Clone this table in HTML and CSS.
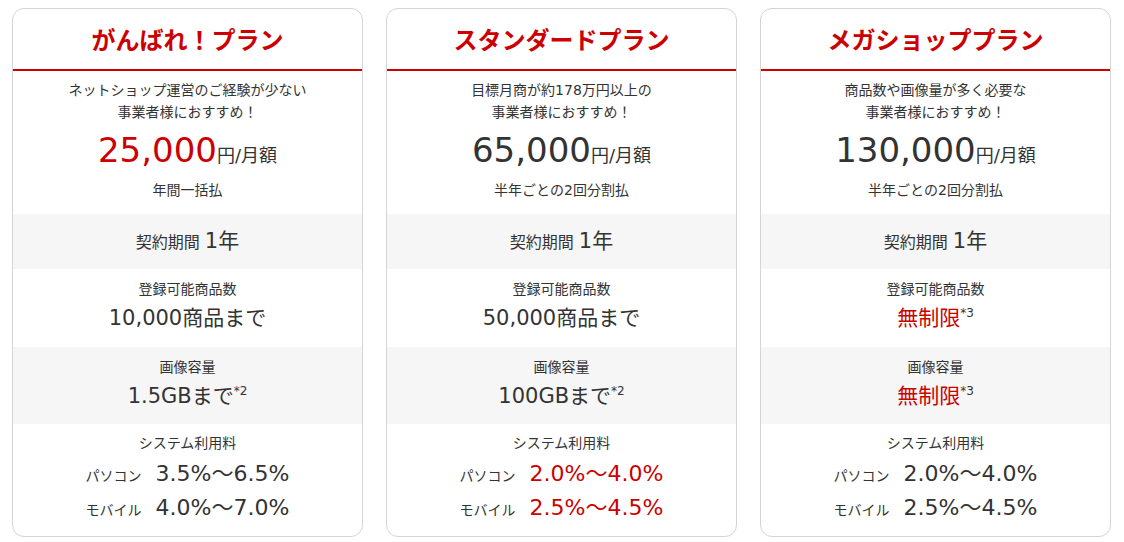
FILE: index.html
```html
<!DOCTYPE html>
<html lang="ja">
<head>
<meta charset="utf-8">
<link rel="stylesheet" href="styles.css">
</head>
<body>
<div class="plans">
  <div class="card">
    <div class="title">がんばれ！プラン</div>
    <div class="intro">
      <p class="desc">ネットショップ運営のご経験が少ない<br>事業者様におすすめ！</p>
      <p class="price"><span class="amount red">25,000</span><span class="unit">円/月額</span></p>
      <p class="note">年間一括払</p>
    </div>
    <div class="term gray">契約期間 <span class="big">1年</span></div>
    <div class="spec">
      <p class="label">登録可能商品数</p>
      <p class="value">10,000商品まで</p>
    </div>
    <div class="spec gray">
      <p class="label">画像容量</p>
      <p class="value">1.5GBまで<sup>*2</sup></p>
    </div>
    <div class="fee">
      <p class="label">システム利用料</p>
      <div class="fee-grid">
        <span class="dev">パソコン</span><span class="rate">3.5%〜6.5%</span>
        <span class="dev">モバイル</span><span class="rate">4.0%〜7.0%</span>
      </div>
    </div>
  </div>

  <div class="card">
    <div class="title">スタンダードプラン</div>
    <div class="intro">
      <p class="desc">目標月商が約178万円以上の<br>事業者様におすすめ！</p>
      <p class="price"><span class="amount">65,000</span><span class="unit">円/月額</span></p>
      <p class="note">半年ごとの2回分割払</p>
    </div>
    <div class="term gray">契約期間 <span class="big">1年</span></div>
    <div class="spec">
      <p class="label">登録可能商品数</p>
      <p class="value">50,000商品まで</p>
    </div>
    <div class="spec gray">
      <p class="label">画像容量</p>
      <p class="value">100GBまで<sup>*2</sup></p>
    </div>
    <div class="fee">
      <p class="label">システム利用料</p>
      <div class="fee-grid">
        <span class="dev">パソコン</span><span class="rate red">2.0%〜4.0%</span>
        <span class="dev">モバイル</span><span class="rate red">2.5%〜4.5%</span>
      </div>
    </div>
  </div>

  <div class="card">
    <div class="title">メガショッププラン</div>
    <div class="intro">
      <p class="desc">商品数や画像量が多く必要な<br>事業者様におすすめ！</p>
      <p class="price"><span class="amount">130,000</span><span class="unit">円/月額</span></p>
      <p class="note">半年ごとの2回分割払</p>
    </div>
    <div class="term gray">契約期間 <span class="big">1年</span></div>
    <div class="spec">
      <p class="label">登録可能商品数</p>
      <p class="value"><span class="red">無制限</span><sup>*3</sup></p>
    </div>
    <div class="spec gray">
      <p class="label">画像容量</p>
      <p class="value"><span class="red">無制限</span><sup>*3</sup></p>
    </div>
    <div class="fee">
      <p class="label">システム利用料</p>
      <div class="fee-grid">
        <span class="dev">パソコン</span><span class="rate">2.0%〜4.0%</span>
        <span class="dev">モバイル</span><span class="rate">2.5%〜4.5%</span>
      </div>
    </div>
  </div>
</div>
</body>
</html>
```

FILE: styles.css
```css
* { box-sizing: border-box; }
html, body { margin: 0; background: #fff; }
body {
  font-family: "DejaVu Sans", "Noto Sans CJK JP", sans-serif;
  color: #333;
}
p { margin: 0; }

.plans {
  display: flex;
  gap: 23px;
  padding: 8px 12px;
}

.card {
  width: 351px;
  border: 1px solid #d4d4d4;
  border-radius: 12px;
  overflow: hidden;
  text-align: center;
}

.title {
  height: 62px;
  line-height: 60px;
  font-family: "Noto Sans CJK JP", sans-serif;
  font-weight: bold;
  font-size: 24px;
  color: #c00;
  border-bottom: 2px solid #c00;
}

.red { color: #c00; }
.gray { background: #f6f6f6; }

.intro {
  padding: 8px 0 13px;
}
.desc {
  font-size: 14px;
  line-height: 22px;
}
.price {
  margin-top: 5px;
  line-height: 44px;
  height: 44px;
}
.amount {
  font-size: 34px;
}
.unit {
  font-size: 18px;
}
.note {
  margin-top: 7px;
  font-size: 14px;
  line-height: 22px;
}

.term {
  height: 55px;
  line-height: 55px;
  font-size: 16px;
}
.term .big {
  font-size: 21px;
}

.spec {
  height: 78px;
  padding-top: 9px;
}
.spec.gray {
  height: 77px;
}
.label {
  font-size: 14px;
  line-height: 22px;
}
.value {
  margin-top: 3px;
  font-size: 21px;
  line-height: 30px;
  height: 30px;
}
sup {
  font-size: 12px;
  line-height: 0;
  vertical-align: 8px;
  color: #333;
}

.fee {
  height: 112px;
  padding-top: 8px;
}
.fee-grid {
  display: grid;
  grid-template-columns: auto auto;
  grid-auto-rows: 34px;
  justify-content: center;
  align-items: baseline;
  column-gap: 14px;
  margin-top: 3px;
}
.dev {
  font-size: 14px;
  line-height: 34px;
  text-align: left;
}
.rate {
  font-size: 22px;
  line-height: 34px;
  text-align: left;
}
```
